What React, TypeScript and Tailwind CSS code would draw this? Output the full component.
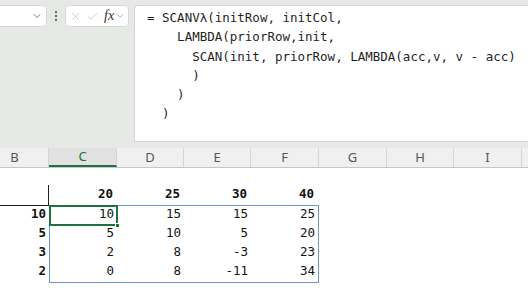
import { X, Check, ChevronDown } from 'lucide-react'

const columns = [
  { name: 'B', width: 'w-[68px]' },
  { name: 'C', width: 'w-[68px]', active: true },
  { name: 'D', width: 'w-[67px]' },
  { name: 'E', width: 'w-[67px]' },
  { name: 'F', width: 'w-[68px]' },
  { name: 'G', width: 'w-[68px]' },
  { name: 'H', width: 'w-[67px]' },
  { name: 'I', width: 'w-[68px]' },
  { name: '', width: 'w-[68px]' },
]

const colHeads = [20, 25, 30, 40]
const rowHeads = [10, 5, 3, 2]
const values = [
  [10, 15, 15, 25],
  [5, 10, 5, 20],
  [2, 8, -3, 23],
  [0, 8, -11, 34],
]
const cellWidths = ['w-[67px]', 'w-[67px]', 'w-[67px]', 'w-[67px]']

const formula = [
  '= SCANVλ(initRow, initCol,',
  '    LAMBDA(priorRow,init,',
  '      SCAN(init, priorRow, LAMBDA(acc,v, v - acc)',
  '      )',
  '    )',
  '  )',
]

const mono = "font-['DejaVu_Sans_Mono','Liberation_Mono',monospace]"

function FormulaBar() {
  return (
    <div className="flex h-[148px] items-start gap-[4px] bg-[#e7e9e6] pt-[5px]">
      <div className="-ml-[10px] flex h-[22px] w-[57px] items-center justify-end rounded-[4px] border border-[#d6d8d5] bg-white pr-[3px]">
        <ChevronDown className="h-[12px] w-[12px] text-[#555]" strokeWidth={1.6} />
      </div>
      <div className="flex h-[22px] w-[10px] items-center justify-center">
        <div className="flex flex-col gap-[2px]">
          <span className="h-[2px] w-[2px] bg-[#666]" />
          <span className="h-[2px] w-[2px] bg-[#666]" />
          <span className="h-[2px] w-[2px] bg-[#666]" />
        </div>
      </div>
      <div className="flex h-[22px] w-[64px] items-center rounded-[4px] border border-[#d6d8d5] bg-white pl-[3px]">
        <X className="h-[13px] w-[13px] text-[#b5b5b5]" strokeWidth={1.2} />
        <Check className="ml-[4px] h-[13px] w-[13px] text-[#b5b5b5]" strokeWidth={1.2} />
        <span className="ml-[5px] font-['Liberation_Serif',serif] text-[14px] italic leading-none text-[#333]">
          fx
        </span>
        <ChevronDown className="ml-[1px] h-[10px] w-[10px] text-[#888]" strokeWidth={1.6} />
      </div>
      <div className="ml-[1px] h-[137px] flex-1 rounded-tl-[4px] border border-r-0 border-[#d3d5d2] bg-white pl-[12px] pt-[2px]">
        <pre className={`${mono} text-[12.5px] leading-[19.3px] text-[#1f1f1f]`}>
          {formula.join('\n')}
        </pre>
      </div>
    </div>
  )
}

function ColumnHeaders() {
  return (
    <div className="-ml-[19px] flex h-[20px] border-b border-[#c6c6c6] bg-[#f0f0f0] font-['Noto_Sans',sans-serif] text-[13px]">
      {columns.map((c, i) => (
        <div
          key={i}
          className={
            c.active
              ? `${c.width} flex shrink-0 items-center justify-center border-r border-b-2 border-r-[#d4d4d4] border-b-[#1e7145] bg-[#e1e1e1] text-[#1e6e3f]`
              : `${c.width} flex shrink-0 items-center justify-center border-r border-[#d4d4d4] text-[#555]`
          }
        >
          {c.name}
        </div>
      ))}
    </div>
  )
}

function Sheet() {
  return (
    <div className={`-ml-[19px] ${mono} text-[12.5px] text-[#111]`}>
      <div className="h-[17px]" />
      <div className="flex h-[20px] items-end">
        <div className="h-[20px] w-[68px] shrink-0 border-r border-[#222]" />
        {colHeads.map((h, i) => (
          <div key={i} className={`${i === 0 ? 'w-[68px]' : 'w-[67px]'} pb-[1px] pr-[4px] text-right font-bold`}>
            {h}
          </div>
        ))}
      </div>
      <div className="flex">
        <div className="w-[68px] shrink-0 border-t border-[#222]">
          {rowHeads.map((r, i) => (
            <div key={i} className="flex h-[19px] items-end justify-end pr-[3px] font-bold">
              <span className="pb-[1px]">{r}</span>
            </div>
          ))}
        </div>
        <div className="relative border border-[#6d95d5]">
          {values.map((row, ri) => (
            <div key={ri} className="flex h-[19px]">
              {row.map((v, ci) => (
                <div key={ci} className={`${cellWidths[ci]} flex items-end justify-end pb-[1px] pr-[3px]`}>
                  {v}
                </div>
              ))}
            </div>
          ))}
          <div className="absolute -left-[1px] -top-[1px] h-[21px] w-[69px] border-2 border-[#1e7145]" />
          <div className="absolute left-[65px] top-[17px] h-[5px] w-[5px] border border-white bg-[#1e7145]" />
        </div>
      </div>
    </div>
  )
}

export default function App() {
  return (
    <div className="h-[306px] w-[528px] overflow-hidden bg-white">
      <FormulaBar />
      <ColumnHeaders />
      <Sheet />
    </div>
  )
}
